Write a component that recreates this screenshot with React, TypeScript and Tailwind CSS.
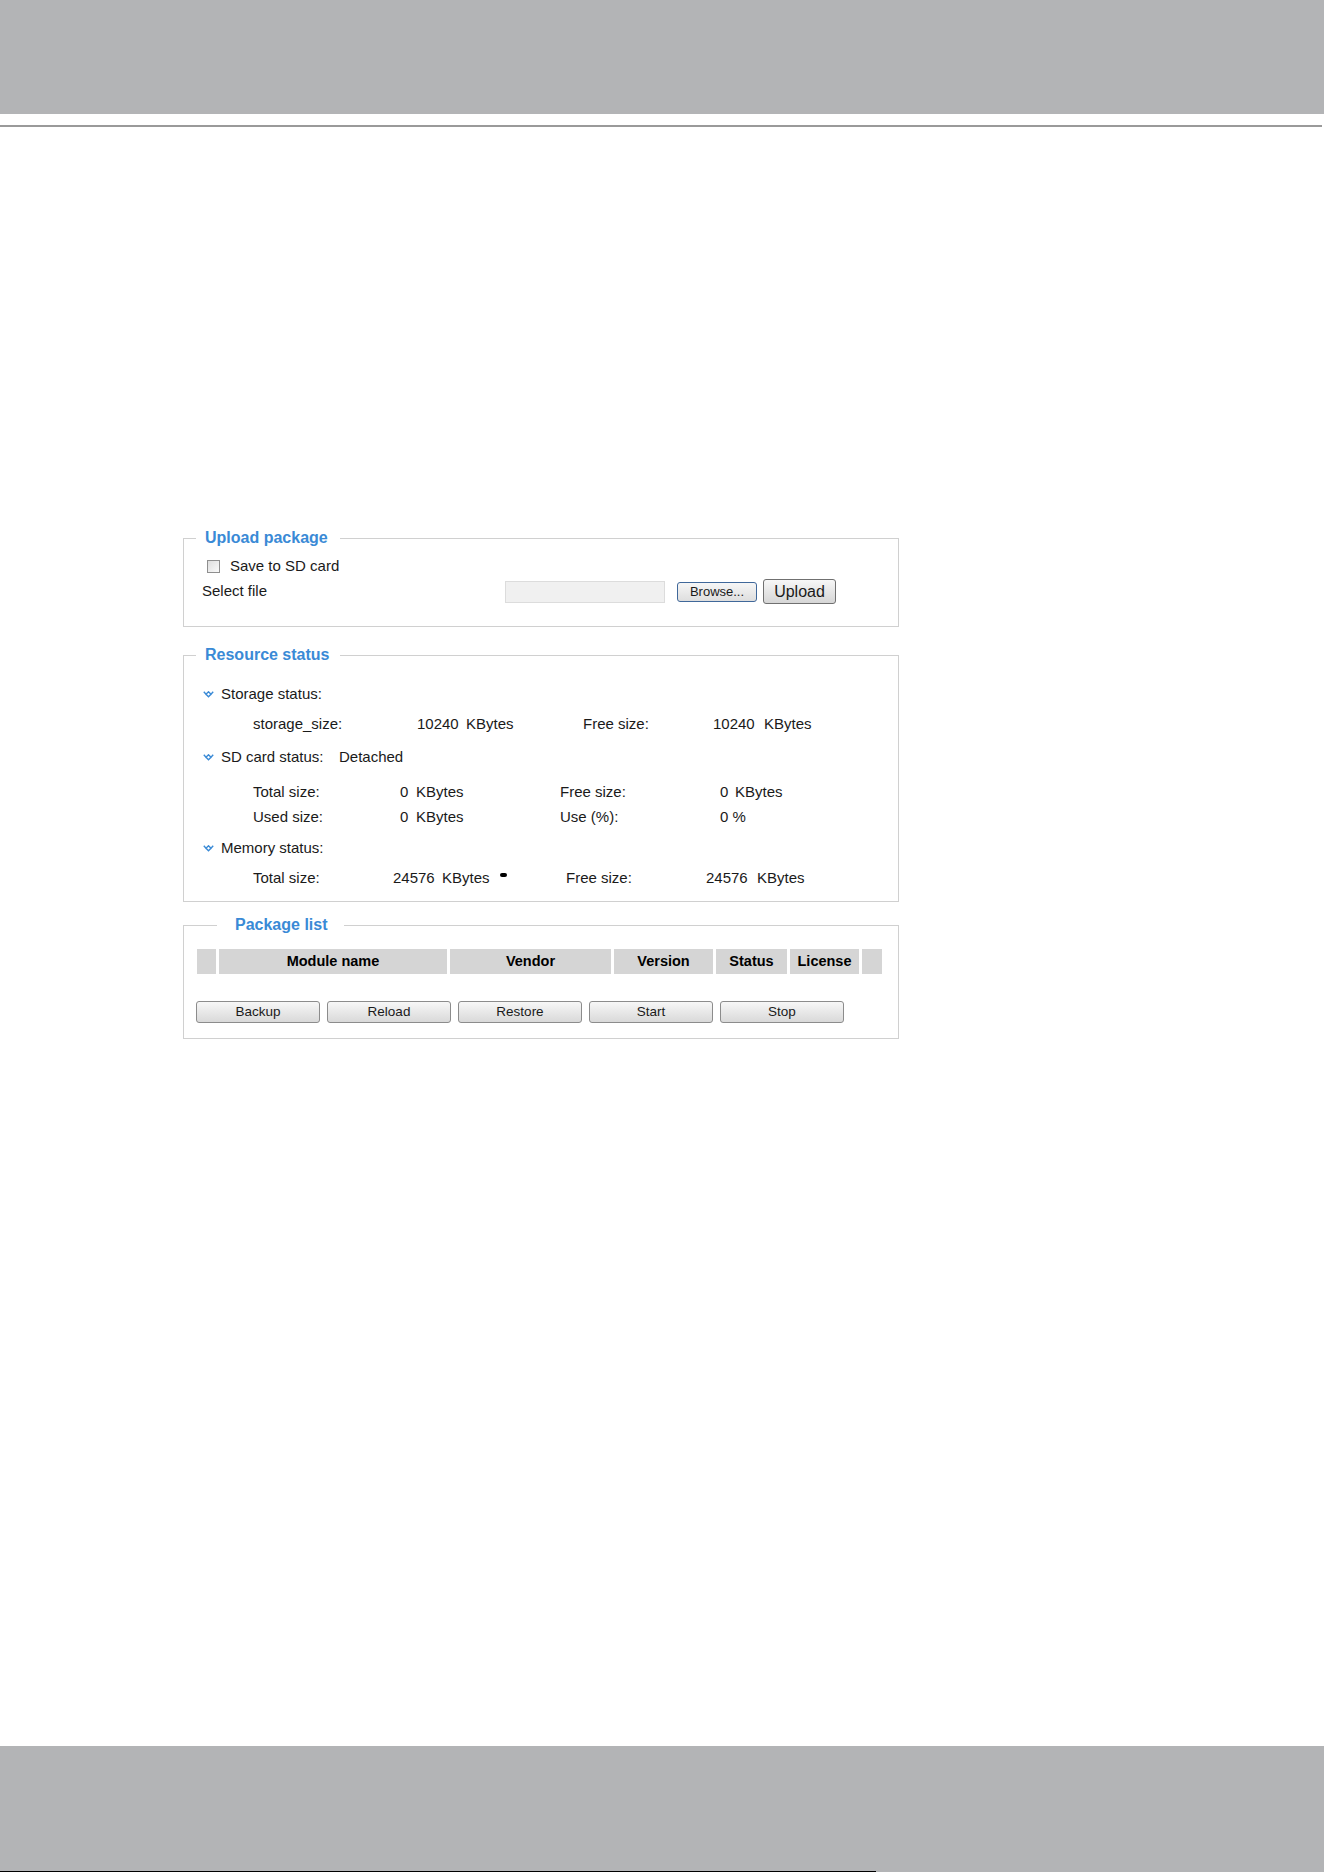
import React from 'react';

// small blue double chevron used in front of each status group
const Chevron: React.FC = () => (
  <svg width="11" height="7" viewBox="0 0 11 7" className="shrink-0">
    <polyline points="0.8,0.8 3,3.2 5.5,0.8 8,3.2 10.2,0.8" fill="none" stroke="#3a8ad6" strokeWidth="1.4" />
    <polyline points="3,3.2 5.5,5.8 8,3.2" fill="none" stroke="#3a8ad6" strokeWidth="1.4" />
  </svg>
);

const GrayButton: React.FC<{ label: string }> = ({ label }) => (
  <button
    type="button"
    className="w-[124px] h-[22px] rounded-[3px] border border-[#8c8c8c] bg-gradient-to-b from-[#f7f7f7] to-[#d9d9d9] text-[13.5px] leading-[20px] text-[#1a1a1a]"
  >
    {label}
  </button>
);

const columns = [
  { label: '', width: 'w-[19px]' },
  { label: 'Module name', width: 'w-[228px]' },
  { label: 'Vendor', width: 'w-[161px]' },
  { label: 'Version', width: 'w-[99px]' },
  { label: 'Status', width: 'w-[71px]' },
  { label: 'License', width: 'w-[69px]' },
  { label: '', width: 'w-[20px]' },
];

export default function App() {
  return (
    <div className="w-[1324px] h-[1872px] flex flex-col bg-white font-['Liberation_Sans',Arial,sans-serif] text-[#1a1a1a]">
      <header className="h-[114px] bg-[#b3b4b6]" />
      <div className="mt-[11px] w-[1322px] h-[2px] bg-[#9a9a9a]" />

      <main className="flex-1 pl-[183px] pt-[401px]">
        <div className="w-[716px] flex flex-col">
          {/* Upload package */}
          <fieldset className="border border-[#d0d0d0] pb-[22px]">
            <legend className="ml-[12px] pl-[9px] pr-[12px] text-[16px] leading-[20px] font-bold text-[#3a8ad6]">
              Upload package
            </legend>
            <div className="mt-[9px] flex items-center h-[18px] pl-[23px] text-[15px]">
              <span className="w-[13px] h-[13px] border border-[#8f8f8f] bg-gradient-to-br from-[#dedede] to-[#fafafa]" />
              <span className="ml-[10px]">Save to SD card</span>
            </div>
            <div className="mt-[4px] flex items-center h-[25px] pl-[18px] text-[15px]">
              <span className="w-[303px]">Select file</span>
              <span className="w-[160px] h-[22px] bg-[#f0f0f0] border border-[#dcdcdc]" />
              <button
                type="button"
                className="ml-[12px] w-[80px] h-[20px] rounded-[3px] border border-[#40689a] bg-gradient-to-b from-[#f6f6f6] to-[#dedede] text-[13px] leading-[18px]"
              >
                Browse...
              </button>
              <button
                type="button"
                className="ml-[6px] w-[73px] h-[25px] rounded-[3px] border border-[#707070] bg-gradient-to-b from-[#f7f7f7] to-[#d6d6d6] text-[16px] leading-[23px]"
              >
                Upload
              </button>
            </div>
          </fieldset>

          {/* Resource status */}
          <fieldset className="mt-[18px] border border-[#d0d0d0] pb-[14px] text-[15px]">
            <legend className="ml-[12px] pl-[9px] pr-[10px] text-[16px] leading-[20px] font-bold text-[#3a8ad6]">
              Resource status
            </legend>

            <div className="mt-[20px] flex items-center h-[18px] pl-[19px]">
              <Chevron />
              <span className="ml-[7px]">Storage status:</span>
            </div>
            <div className="mt-[12px] flex items-center h-[18px] pl-[69px]">
              <span className="w-[164px]">storage_size:</span>
              <span className="w-[49px]">10240</span>
              <span className="w-[117px]">KBytes</span>
              <span className="w-[130px]">Free size:</span>
              <span className="w-[51px]">10240</span>
              <span>KBytes</span>
            </div>

            <div className="mt-[15px] flex items-center h-[18px] pl-[19px]">
              <Chevron />
              <span className="ml-[7px] w-[118px]">SD card status:</span>
              <span>Detached</span>
            </div>
            <div className="mt-[17px] flex items-center h-[18px] pl-[69px]">
              <span className="w-[147px]">Total size:</span>
              <span className="w-[16px]">0</span>
              <span className="w-[144px]">KBytes</span>
              <span className="w-[160px]">Free size:</span>
              <span className="w-[15px]">0</span>
              <span>KBytes</span>
            </div>
            <div className="mt-[7px] flex items-center h-[18px] pl-[69px]">
              <span className="w-[147px]">Used size:</span>
              <span className="w-[16px]">0</span>
              <span className="w-[144px]">KBytes</span>
              <span className="w-[160px]">Use (%):</span>
              <span>0 %</span>
            </div>

            <div className="mt-[13px] flex items-center h-[18px] pl-[19px]">
              <Chevron />
              <span className="ml-[7px]">Memory status:</span>
            </div>
            <div className="mt-[12px] flex items-center h-[18px] pl-[69px]">
              <span className="w-[140px]">Total size:</span>
              <span className="w-[49px]">24576</span>
              <span className="w-[124px] flex items-center">
                KBytes
                <span className="ml-[10px] w-[7px] h-[4px] rounded-full bg-black -translate-y-[3px]" />
              </span>
              <span className="w-[140px]">Free size:</span>
              <span className="w-[51px]">24576</span>
              <span>KBytes</span>
            </div>
          </fieldset>

          {/* Package list */}
          <fieldset className="mt-[13px] border border-[#d0d0d0] pb-[15px]">
            <legend className="ml-[33px] pl-[18px] pr-[16px] text-[16px] leading-[20px] font-bold text-[#3a8ad6]">
              Package list
            </legend>
            <div className="mt-[14px] pl-[13px] flex gap-[3px]">
              {columns.map((col, i) => (
                <div
                  key={i}
                  className={`${col.width} h-[25px] bg-[#d5d5d5] flex items-center justify-center text-[14.5px] font-bold text-black`}
                >
                  {col.label}
                </div>
              ))}
            </div>
            <div className="mt-[27px] pl-[12px] flex gap-[7px]">
              <GrayButton label="Backup" />
              <GrayButton label="Reload" />
              <GrayButton label="Restore" />
              <GrayButton label="Start" />
              <GrayButton label="Stop" />
            </div>
          </fieldset>
        </div>
      </main>

      <footer className="h-[126px] bg-[#b3b4b6] flex flex-col justify-end">
        <div className="w-[876px] h-px bg-black" />
      </footer>
    </div>
  );
}
